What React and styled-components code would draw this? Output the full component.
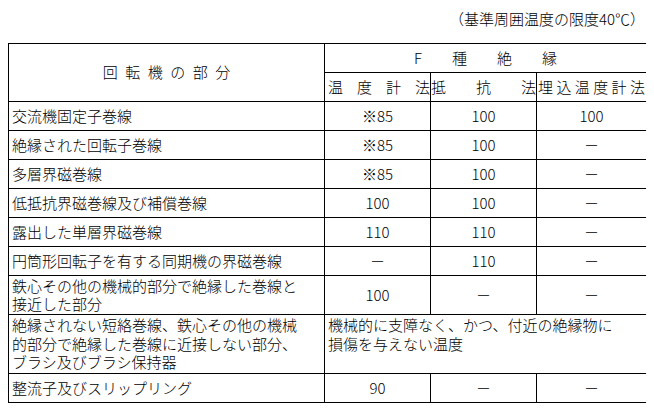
import React from 'react'
import styled, { createGlobalStyle } from 'styled-components'

const GlobalStyle = createGlobalStyle`
  body {
    margin: 8px;
    background: #fff;
    color: #000;
    font-family: "Noto Sans CJK JP", "Noto Sans", sans-serif;
    font-weight: 300;
  }
`

const Page = styled.div`
  width: 639px;
`

const Caption = styled.div`
  height: 35px;
  line-height: 21px;
  font-size: 15px;
  text-align: right;
  padding-right: 2px;
  box-sizing: border-box;
`

const Table = styled.div`
  display: grid;
  grid-template-columns: 316px 106px 106px 110px;
  grid-template-rows: repeat(8, 29px) 39px 59px 29px;
  border-top: 1px solid #000;
  border-left: 1px solid #000;
  font-size: 15px;
`

const Cell = styled.div`
  box-sizing: border-box;
  border-right: 1px solid #000;
  border-bottom: 1px solid #000;
  display: flex;
  align-items: ${p => (p.$top ? 'flex-start' : 'center')};
  justify-content: ${p => (p.$center ? 'center' : 'flex-start')};
  padding: ${p => (p.$top ? '1px 3px 0' : '0 3px')};
  line-height: 18.5px;
  white-space: pre-line;
  grid-column: span ${p => p.$span || 1};
  grid-row: span ${p => p.$rows || 1};
`

const Spaced = styled.span`
  letter-spacing: ${p => p.$gap}px;
  padding-left: ${p => p.$gap}px;
`

const Spread = styled(Cell)`
  justify-content: space-between;
  padding: 0 ${p => p.$pr ?? 1}px 0 ${p => p.$pl ?? 1}px;
`

const rows = [
  { part: '交流機固定子巻線', vals: ['※85', '100', '100'] },
  { part: '絶縁された回転子巻線', vals: ['※85', '100', '－'] },
  { part: '多層界磁巻線', vals: ['※85', '100', '－'] },
  { part: '低抵抗界磁巻線及び補償巻線', vals: ['100', '100', '－'] },
  { part: '露出した単層界磁巻線', vals: ['110', '110', '－'] },
  { part: '円筒形回転子を有する同期機の界磁巻線', vals: ['－', '110', '－'] },
  { part: '鉄心その他の機械的部分で絶縁した巻線と\n接近した部分', vals: ['100', '－', '－'] },
  {
    part: '絶縁されない短絡巻線、鉄心その他の機械\n的部分で絶縁した巻線に近接しない部分、\nブラシ及びブラシ保持器',
    note: '機械的に支障なく、かつ、付近の絶縁物に\n損傷を与えない温度',
  },
  { part: '整流子及びスリップリング', vals: ['90', '－', '－'] },
]

const SpreadText = ({ text, ...rest }) => (
  <Spread {...rest}>
    {[...text].map((c, i) => (
      <span key={i}>{c}</span>
    ))}
  </Spread>
)

export default function App() {
  return (
    <Page>
      <GlobalStyle />
      <Caption>（基準周囲温度の限度40℃）</Caption>
      <Table>
        <Cell $rows={2} $center>
          <Spaced $gap={7.5}>回転機の部分</Spaced>
        </Cell>
        <Cell $span={3} $center>
          <Spaced $gap={30}>F種絶縁</Spaced>
        </Cell>
        <SpreadText text="温度計法" $pl={3} $pr={0} />
        <SpreadText text="抵抗法" $pl={0} $pr={0} />
        <SpreadText text="埋込温度計法" $pl={1} $pr={1} />

        {rows.map((r, i) => (
          <React.Fragment key={i}>
            <Cell>{r.part}</Cell>
            {r.note ? (
              <Cell $span={3} $top>
                {r.note}
              </Cell>
            ) : (
              r.vals.map((v, j) => (
                <Cell key={j} $center>
                  {v}
                </Cell>
              ))
            )}
          </React.Fragment>
        ))}
      </Table>
    </Page>
  )
}
